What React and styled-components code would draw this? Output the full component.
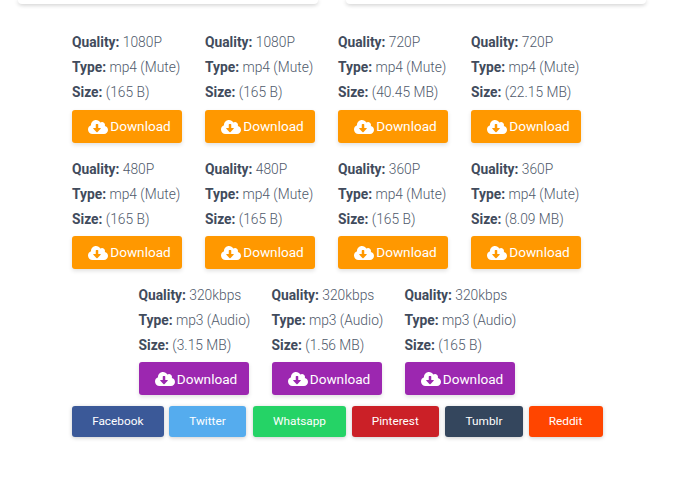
import styled, { createGlobalStyle } from "styled-components";
import { FaCloudDownloadAlt } from "react-icons/fa";

const GlobalStyle = createGlobalStyle`
    html, body {
        margin: 0;
        background: #fff;
        font-family: Roboto, "Liberation Sans", sans-serif;
    }
`;

const Page = styled.div`
    width: 700px;
    height: 477px;
    overflow: hidden;
`;

const TopCards = styled.div`
    display: flex;
    gap: 28px;
    padding-left: 18px;
`;

const TopCard = styled.div`
    width: 300px;
    height: 4px;
    background: #fff;
    border-radius: 0 0 14px 14px;
    box-shadow: 0 1px 4px rgba(0, 0, 0, 0.22);
`;

const Content = styled.div`
    width: 532px;
    margin: 26.4px 0 0 72px;
`;

const Row = styled.div`
    display: flex;
    justify-content: center;
    margin-bottom: ${({ $gap }) => $gap}px;
`;

const Item = styled.div`
    width: 133px;
`;

const Line = styled.div`
    height: 25px;
    line-height: 25px;
    font-size: 13.8px;
    font-weight: 300;
    color: #4f5a6b;
    white-space: nowrap;

    b {
        font-weight: 700;
        color: #414b5c;
    }
`;

const DownloadButton = styled.a`
    display: flex;
    align-items: center;
    justify-content: center;
    gap: 2px;
    width: 110px;
    height: 33px;
    margin-top: 4.2px;
    padding-left: 5px;
    box-sizing: border-box;
    border-radius: 3px;
    background: ${({ $color }) => $color};
    color: #fff;
    font-size: 13.6px;
    font-weight: 450;
    box-shadow: 0 2px 4px rgba(0, 0, 0, 0.12);

    svg {
        font-size: 20px;
        margin-top: 1px;
    }
`;

const ShareRow = styled.div`
    display: flex;
`;

const ShareButton = styled.a`
    display: flex;
    align-items: center;
    justify-content: center;
    width: ${({ $width }) => $width}px;
    height: 31px;
    padding-bottom: 1px;
    box-sizing: border-box;
    margin-left: ${({ $offset }) => $offset}px;
    border-radius: 3px;
    background: ${({ $color }) => $color};
    color: #fff;
    font-size: 11.8px;
    font-weight: 450;
    box-shadow: 0 1px 4px rgba(0, 0, 0, 0.2);
`;

const ORANGE = "#ff9800";
const PURPLE = "#9c27b0";

const videoRows = [
    [
        ["1080P", "mp4 (Mute)", "(165 B)"],
        ["1080P", "mp4 (Mute)", "(165 B)"],
        ["720P", "mp4 (Mute)", "(40.45 MB)"],
        ["720P", "mp4 (Mute)", "(22.15 MB)"],
    ],
    [
        ["480P", "mp4 (Mute)", "(165 B)"],
        ["480P", "mp4 (Mute)", "(165 B)"],
        ["360P", "mp4 (Mute)", "(165 B)"],
        ["360P", "mp4 (Mute)", "(8.09 MB)"],
    ],
];

const audioRow = [
    ["320kbps", "mp3 (Audio)", "(3.15 MB)"],
    ["320kbps", "mp3 (Audio)", "(1.56 MB)"],
    ["320kbps", "mp3 (Audio)", "(165 B)"],
];

const shares = [
    ["Facebook", "#3b5998", 91.5, 0],
    ["Twitter", "#55acee", 77, 5.5],
    ["Whatsapp", "#25d366", 93, 7],
    ["Pinterest", "#cb2027", 87.5, 5.5],
    ["Tumblr", "#34465d", 78, 6],
    ["Reddit", "#ff4500", 74, 5.5],
];

function DownloadItem({ info, color }) {
    const [quality, type, size] = info;
    return (
        <Item>
            <Line><b>Quality:</b> {quality}</Line>
            <Line><b>Type:</b> {type}</Line>
            <Line><b>Size:</b> {size}</Line>
            <DownloadButton $color={color}>
                <FaCloudDownloadAlt />
                Download
            </DownloadButton>
        </Item>
    );
}

export default function App() {
    return (
        <Page>
            <GlobalStyle />
            <TopCards>
                <TopCard />
                <TopCard />
            </TopCards>
            <Content>
                {videoRows.map((row, i) => (
                    <Row key={i} $gap={14.2}>
                        {row.map((info, j) => (
                            <DownloadItem key={j} info={info} color={ORANGE} />
                        ))}
                    </Row>
                ))}
                <Row $gap={10.8}>
                    {audioRow.map((info, j) => (
                        <DownloadItem key={j} info={info} color={PURPLE} />
                    ))}
                </Row>
                <ShareRow>
                    {shares.map(([name, color, width, offset]) => (
                        <ShareButton key={name} $color={color} $width={width} $offset={offset}>
                            {name}
                        </ShareButton>
                    ))}
                </ShareRow>
            </Content>
        </Page>
    );
}
